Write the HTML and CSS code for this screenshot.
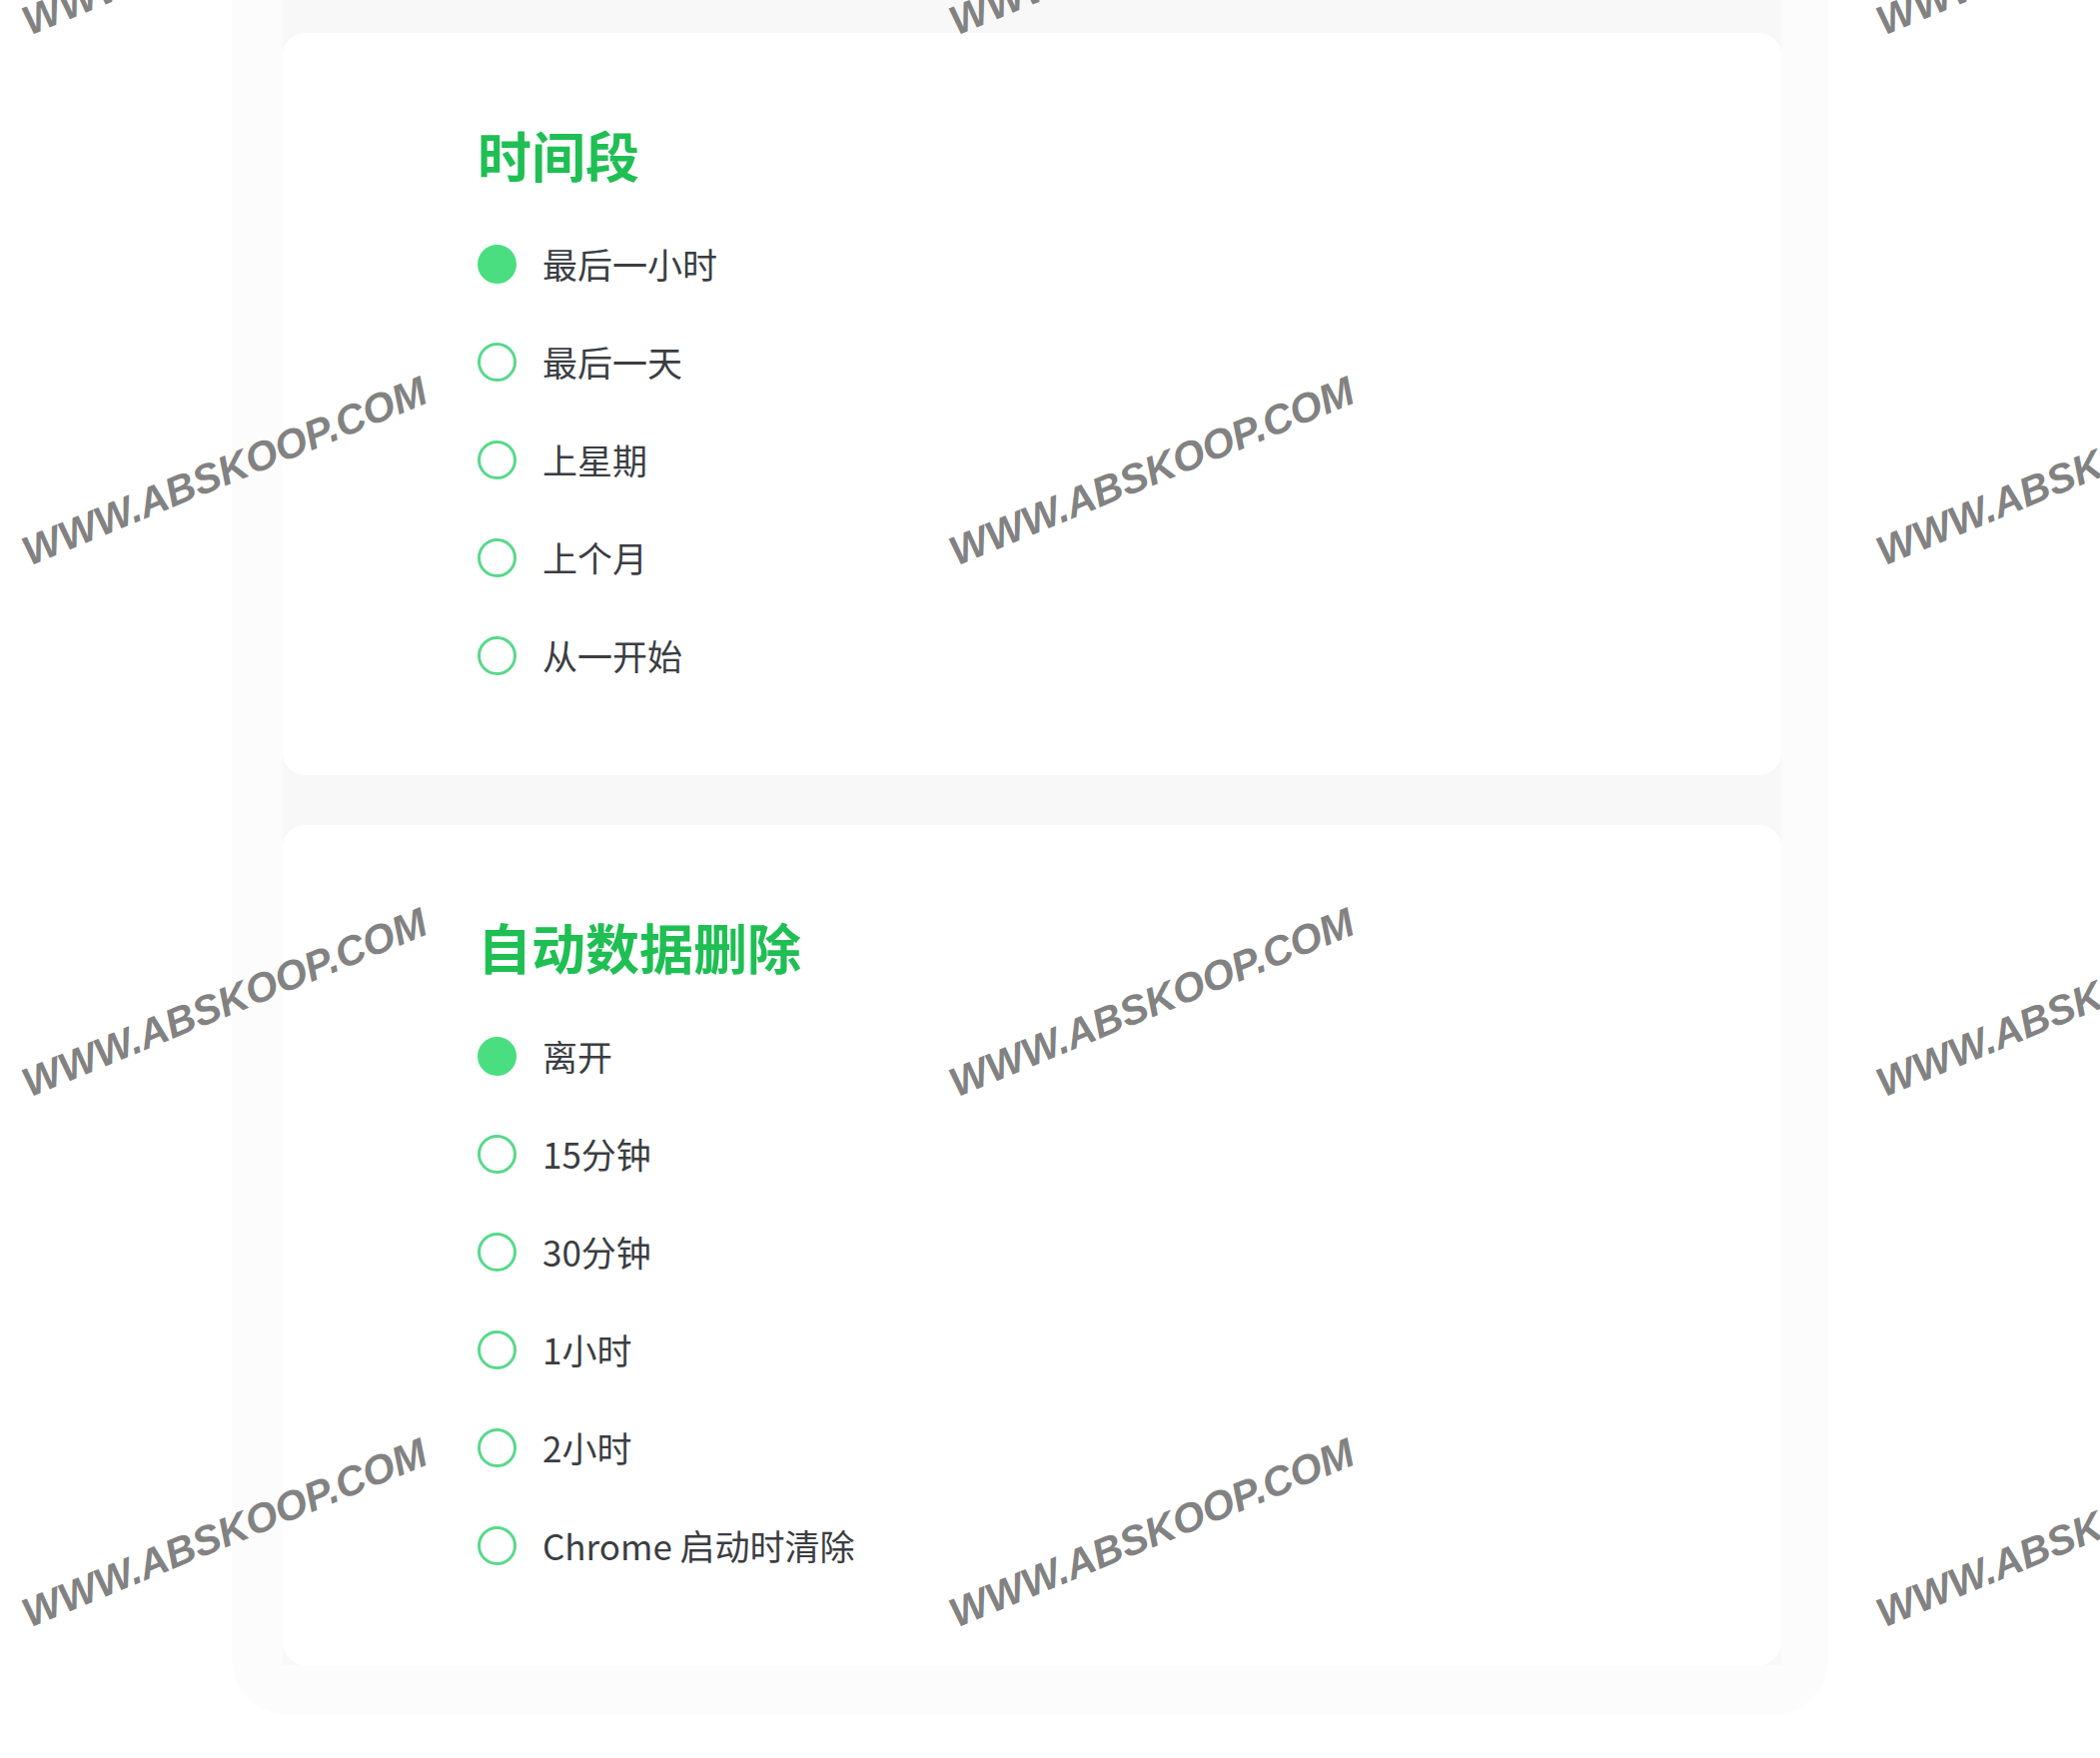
FILE: index.html
```html
<!DOCTYPE html>
<html lang="zh-CN">
<head>
<meta charset="utf-8">
<title>设置</title>
<link rel="stylesheet" href="styles.css">
</head>
<body>
<div class="page">
  <div class="shell">
    <div class="stack">
      <section class="card">
        <h2 class="card-title">时间段</h2>
        <ul class="options">
          <li class="option"><span class="radio checked"></span><span class="label">最后一小时</span></li>
          <li class="option"><span class="radio"></span><span class="label">最后一天</span></li>
          <li class="option"><span class="radio"></span><span class="label">上星期</span></li>
          <li class="option"><span class="radio"></span><span class="label">上个月</span></li>
          <li class="option"><span class="radio"></span><span class="label">从一开始</span></li>
        </ul>
      </section>
      <section class="card">
        <h2 class="card-title">自动数据删除</h2>
        <ul class="options">
          <li class="option"><span class="radio checked"></span><span class="label">离开</span></li>
          <li class="option"><span class="radio"></span><span class="label">15分钟</span></li>
          <li class="option"><span class="radio"></span><span class="label">30分钟</span></li>
          <li class="option"><span class="radio"></span><span class="label">1小时</span></li>
          <li class="option"><span class="radio"></span><span class="label">2小时</span></li>
          <li class="option"><span class="radio"></span><span class="label">Chrome 启动时清除</span></li>
        </ul>
      </section>
    </div>
  </div>

  <div class="wm wm-a0">WWW.ABSKOOP.COM</div>
  <div class="wm wm-b0">WWW.ABSKOOP.COM</div>
  <div class="wm wm-c0">WWW.ABSKOOP.COM</div>
  <div class="wm wm-a1">WWW.ABSKOOP.COM</div>
  <div class="wm wm-b1">WWW.ABSKOOP.COM</div>
  <div class="wm wm-c1">WWW.ABSKOOP.COM</div>
  <div class="wm wm-a2">WWW.ABSKOOP.COM</div>
  <div class="wm wm-b2">WWW.ABSKOOP.COM</div>
  <div class="wm wm-c2">WWW.ABSKOOP.COM</div>
  <div class="wm wm-a3">WWW.ABSKOOP.COM</div>
  <div class="wm wm-b3">WWW.ABSKOOP.COM</div>
  <div class="wm wm-c3">WWW.ABSKOOP.COM</div>
</div>
</body>
</html>
```

FILE: styles.css
```css
html, body {
  margin: 0;
  padding: 0;
  background: #ffffff;
  overflow: hidden;
}

body {
  font-family: "Noto Sans CJK SC", "Noto Sans", sans-serif;
  color: #3a3d42;
}

.page {
  position: relative;
  width: 2102px;
  height: 1760px;
}

.shell {
  margin-left: 232px;
  width: 1598px;
  background: #fcfcfc;
  border-radius: 0 0 56px 56px;
  padding-bottom: 50px;
}

.stack {
  display: flex;
  flex-direction: column;
  gap: 50px;
  margin-left: 51px;
  width: 1500px;
  padding-top: 33px;
  background: #f8f8f8;
}

.card {
  background: #ffffff;
  border-radius: 22px;
  padding: 90px 0 71px 195px;
}

.card-title {
  margin: 0 0 28px 0;
  font-family: "Noto Sans CJK SC", sans-serif;
  font-size: 54px;
  line-height: 64px;
  font-weight: 700;
  color: #1fbf53;
}

.options {
  list-style: none;
  margin: 0;
  padding: 0;
}

.option {
  display: flex;
  align-items: center;
  height: 98px;
  gap: 26px;
}

.radio {
  box-sizing: border-box;
  width: 39px;
  height: 39px;
  border-radius: 50%;
  border: 3px solid #58d98a;
  background: #ffffff;
  flex: none;
}

.radio.checked {
  border-color: #4ade80;
  background: #4ade80;
}

.label {
  font-family: "Noto Sans CJK SC", sans-serif;
  font-size: 35px;
  line-height: 44px;
  color: #3a3d42;
}

.wm {
  position: absolute;
  white-space: nowrap;
  font-family: "Liberation Sans", Arial, sans-serif;
  font-weight: 700;
  font-style: italic;
  font-size: 41px;
  color: #828282;
  transform: translate(-50%, -50%) rotate(-22.3deg);
  pointer-events: none;
}

.wm-a0 { left: 225px; top: -59px; }
.wm-b0 { left: 1153px; top: -59px; }
.wm-c0 { left: 2081px; top: -59px; }
.wm-a1 { left: 225px; top: 472px; }
.wm-b1 { left: 1153px; top: 472px; }
.wm-c1 { left: 2081px; top: 472px; }
.wm-a2 { left: 225px; top: 1004px; }
.wm-b2 { left: 1153px; top: 1004px; }
.wm-c2 { left: 2081px; top: 1004px; }
.wm-a3 { left: 225px; top: 1535px; }
.wm-b3 { left: 1153px; top: 1535px; }
.wm-c3 { left: 2081px; top: 1535px; }
```
